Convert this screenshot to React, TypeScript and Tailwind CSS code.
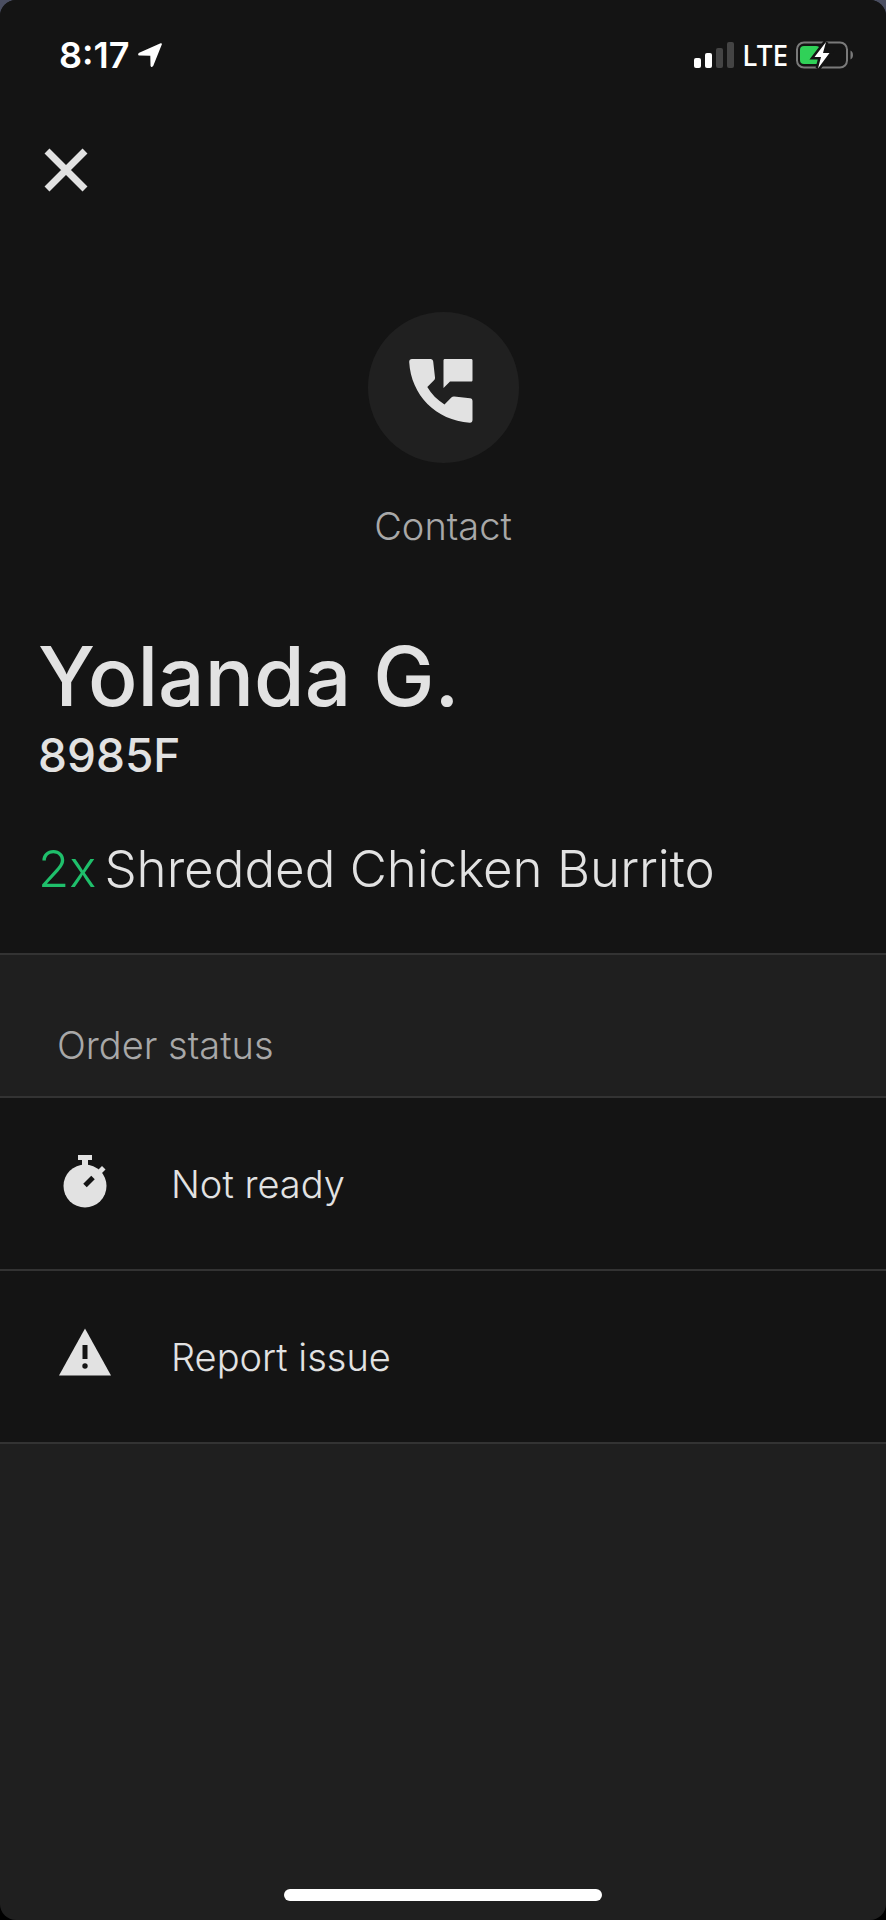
import { ReactNode } from "react";

interface StatusOption {
  id: number;
  label: string;
  icon: ReactNode;
}

const LocationArrow = () => (
  <svg viewBox="0 0 24 24" className="w-6 h-6" fill="#fff" aria-hidden="true">
    <path d="M22.6.3c.9-.4 1.6.4 1.2 1.3L15.3 22.8c-.7 1.6-2.7 1.4-2.8-.4l-.2-9.7-10.7-.2C-.2 12.4-.4 10.4 1.2 9.700z" />
  </svg>
);

const SignalBars = () => (
  <svg viewBox="0 0 40 26" className="w-10 h-[26px]" aria-hidden="true">
    <rect x="0" y="16" width="7" height="10" rx="2" fill="#fff" />
    <rect x="11" y="11" width="7" height="15" rx="2" fill="#fff" />
    <rect x="22" y="6" width="7" height="20" rx="2" fill="#444" />
    <rect x="33" y="0" width="7" height="26" rx="2" fill="#444" />
  </svg>
);

const Battery = () => (
  <svg viewBox="0 0 58 28" className="w-[58px] h-7" aria-hidden="true">
    <rect x="1" y="1.5" width="50" height="25" rx="7" fill="none" stroke="#7a7a7a" strokeWidth="2" />
    <path d="M54.5 9.5c3.3 1 3.3 8 0 9z" fill="#7a7a7a" />
    <rect x="4" y="5" width="20" height="18" rx="4" fill="#30d158" />
    <path d="M30 1 18.5 16H25L22 27.5 33.5 12H27z" fill="#fff" stroke="#141414" strokeWidth="5" />
    <path d="M30 1 18.5 16H25L22 27.5 33.5 12H27z" fill="#fff" />
  </svg>
);

const CloseIcon = () => (
  <svg viewBox="0 0 44 44" className="w-11 h-11" stroke="#e2e2e2" strokeWidth="7" aria-hidden="true">
    <path d="M3 3l38 38M41 3L3 41" />
  </svg>
);

const ContactIcon = () => (
  <svg viewBox="0 -7 68 71" className="w-[68px] h-[71px]" fill="#e2e2e2" aria-hidden="true">
    <path d="M3 0h18.5c1.6 0 2.5 1 2.7 2.500L26 18.500c.1 1.200-.2 2-1 2.700L18.300 28c4 7 10 13 17.200 17.500l6.800-7c.9-.9 1.800-1.200 3-1.100L61 39.300c1.600.2 2.500 1.200 2.500 2.700v19c0 1.700-1 2.800-2.800 2.700C27 61.500 2 36 .2 3 .1 1.200 1.300 0 3 0z" />
    <path d="M36 0h26c1 0 1.500.5 1.500 1.500V21c0 1-.5 1.500-1.500 1.500H41l-6.500 6.500V1.500C34.500.5 35 0 36 0z" />
  </svg>
);

const StopwatchIcon = () => (
  <svg viewBox="0 3 52 54" className="w-[52px] h-[54px] overflow-visible" fill="#e2e2e2" aria-hidden="true">
    <circle cx="26" cy="32" r="21.5" />
    <path d="M19 1h14v5h-4v6h-6V6h-4z" />
    <path d="M43 12l3.500 3.500-4.500 4.500-3.500-3.500z" />
    <path d="M26 31.500l8-8" stroke="#141414" strokeWidth="5" />
  </svg>
);

const WarningIcon = () => (
  <svg viewBox="0 9 52 54" className="w-[52px] h-[54px] overflow-visible" fill="#e2e2e2" aria-hidden="true">
    <path d="M26 7.500l26 47H0z" />
    <path d="M23.500 24h5v14h-5z" fill="#141414" />
    <circle cx="26" cy="45" r="2.700" fill="#141414" />
  </svg>
);

const options: StatusOption[] = [
  { id: 1, label: "Not ready", icon: <StopwatchIcon /> },
  { id: 2, label: "Report issue", icon: <WarningIcon /> },
];

const App = () => {
  return (
    <div className="bg-linear-to-b from-[#4a4e61] from-50% to-black to-50%">
      <div className="min-h-screen flex flex-col rounded-2xl overflow-hidden bg-[#1f1f1f] text-[#e2e2e2] font-['Inter',sans-serif]">
        {/* Phone status bar */}
        <header className="flex items-center justify-between bg-[#141414] pt-8 pl-[59px] pr-8 text-white">
          <div className="flex items-center gap-2 text-4xl leading-[46px] font-semibold">
            <span>8:17</span>
            <LocationArrow />
          </div>
          <div className="flex items-center gap-2">
            <SignalBars />
            <span className="text-[28px] leading-[46px] font-medium font-['Noto_Sans',sans-serif]">LTE</span>
            <Battery />
          </div>
        </header>

        <main className="flex flex-col grow">
          <section className="bg-[#141414] px-[38px] pb-[52px] border-b-2 border-[#333]">
            <div className="pt-[70px] pl-[6px]">
              <button type="button" aria-label="Close" className="block">
                <CloseIcon />
              </button>
            </div>

            <div className="flex justify-center pt-[120px]">
              <button type="button" className="flex flex-col items-center gap-10 text-[#a8a8a8]">
                <span className="flex items-center justify-center w-[151px] h-[151px] rounded-full bg-[#202020]">
                  <ContactIcon />
                </span>
                <span className="text-[38px] leading-[46px] font-light">Contact</span>
              </button>
            </div>

            <h1 className="pt-[78px] text-[82px] leading-[100px] font-medium">Yolanda G.</h1>
            <p className="text-[46px] leading-[56px] font-medium">8985F</p>
            <p className="flex gap-2 pt-[54px] text-[51px] leading-[64px] font-light">
              <span className="text-[#1fbf6b]">2x</span>
              <span>Shredded Chicken Burrito</span>
            </p>
          </section>

          <h2 className="px-[57px] pt-[67px] pb-7 border-b-2 border-[#333] text-[38px] leading-[46px] font-light text-[#a8a8a8]">
            Order status
          </h2>

          <ul>
            {options.map((option) => (
              <li key={option.id} className="border-b-2 border-[#333] bg-[#141414]">
                <button type="button" className="flex items-center gap-[60px] w-full h-[171px] px-[59px]">
                  {option.icon}
                  <span className="text-[38px] leading-[46px] font-light">{option.label}</span>
                </button>
              </li>
            ))}
          </ul>
        </main>

        {/* Home indicator */}
        <footer className="flex justify-center pb-[19px]">
          <div className="w-[36%] h-3 rounded-full bg-white" />
        </footer>
      </div>
    </div>
  );
};

export default App;
